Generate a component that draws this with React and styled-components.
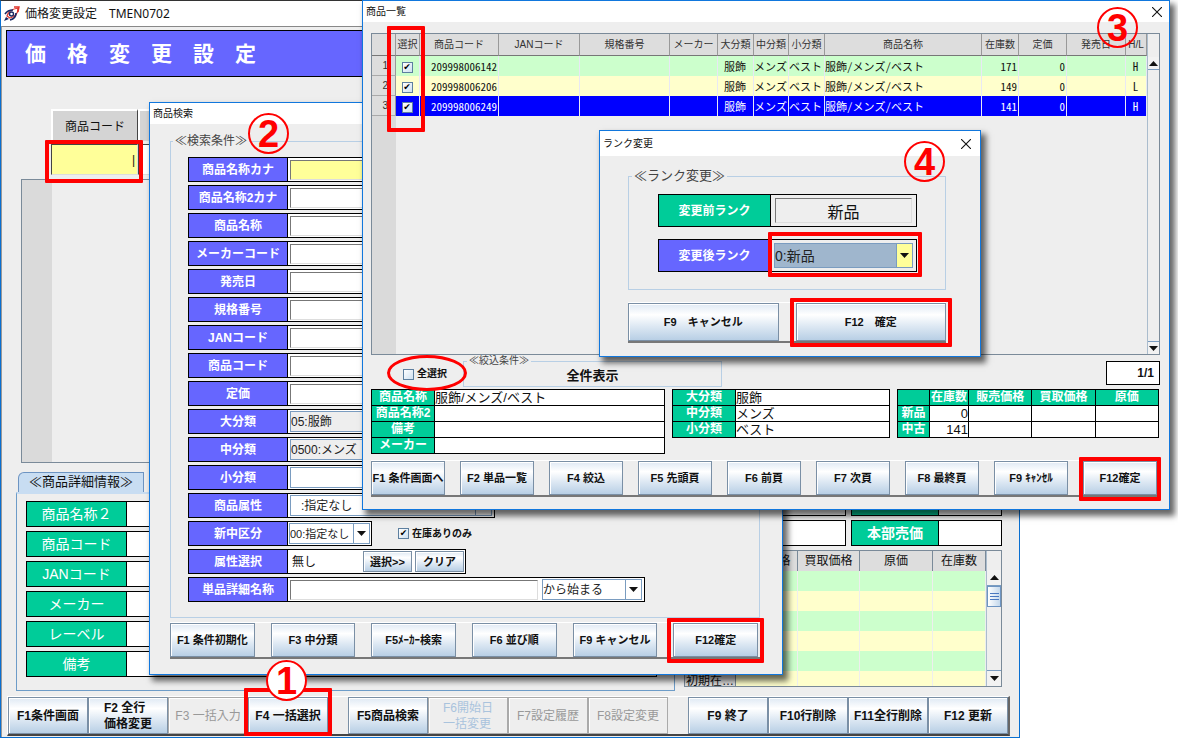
import React from "react";
import styled, { createGlobalStyle } from "styled-components";

const GlobalStyle = createGlobalStyle`
    * {
        box-sizing: border-box;
    }
    body {
        margin: 0;
        background: #fff;
        color: #111;
        font-family: "Liberation Sans", "Noto Sans CJK JP", sans-serif;
        font-size: 12px;
        line-height: 16px;
    }
    button, input, select {
        margin: 0;
        font: inherit;
        color: inherit;
        border-radius: 0;
    }
    h1, h2 {
        margin: 0;
        font-weight: normal;
    }
`;

/* ---------- windows ---------- */
const Desktop = styled.div`
    position: relative;
    min-height: 100vh;
    overflow: hidden;
`;
const MainWindow = styled.main`
    margin-right: 158px;
    min-height: 100vh;
    display: flex;
    flex-direction: column;
    background: #eee;
    border: 1px solid #0a6fd0;
    border-top-color: #333;
`;
const SubWindow = styled.section`
    position: absolute;
    z-index: ${(p) => p.$level};
    left: ${(p) => p.$left};
    right: ${(p) => p.$right};
    top: ${(p) => p.$top};
    background: #eee;
    border: 1px solid #1177dd;
    box-shadow: 4px 5px 6px 1px rgba(0, 0, 0, 0.6);
`;
const TitleBar = styled.header`
    display: flex;
    align-items: center;
    height: ${(p) => p.$height};
    padding: 0 ${(p) => p.$right || "9px"} 0 3px;
    background: #fff;
`;
const MainTitle = styled.span`
    margin-left: 5px;
    font-family: "Noto Sans", "Noto Sans CJK JP", sans-serif;
    font-size: 12px;
    white-space: pre;
`;
const SubTitle = styled.h2`
    flex: 1;
    font-size: 10px;
    line-height: 18px;
`;
const CloseButton = styled.button`
    display: flex;
    padding: 0;
    border: 0;
    background: none;
`;

/* ---------- red guide marks ---------- */
const Marked = styled.div`
    position: relative;
`;
const Mark = styled.span`
    position: absolute;
    z-index: 1;
    inset: ${(p) => p.$inset};
    width: ${(p) => p.$width || "auto"};
    border: ${(p) => (p.$round ? "3px" : "4px")} solid #f00;
    border-radius: ${(p) => (p.$round ? "50%" : "1px")};
    pointer-events: none;
`;
const StepBadge = styled.span`
    position: absolute;
    z-index: 2;
    top: ${(p) => p.$top};
    left: ${(p) => p.$left || "auto"};
    right: ${(p) => p.$right || "auto"};
    width: 41px;
    height: 41px;
    border: 2px solid #f00;
    border-radius: 50%;
    background: ${(p) => (p.$clear ? "transparent" : "#fff")};
    color: #f00;
    font-size: 38px;
    font-weight: bold;
    line-height: 38px;
    text-align: center;
`;

/* ---------- function keys ---------- */
const KeyBar = styled.div`
    display: grid;
    grid-template-columns: repeat(${(p) => p.$count}, minmax(0, 1fr));
    gap: ${(p) => p.$gap};
    margin-top: ${(p) => p.$top};
    padding-right: ${(p) => p.$end || "3px"};
    border-top: 1px solid #fff;
    border-bottom: 2px solid #777;
`;
const KeyButton = styled.button`
    display: block;
    width: 100%;
    height: ${(p) => p.$height || "34px"};
    padding: 0;
    border: 1px solid #7a8fa5;
    box-shadow: inset 1px 1px 0 #fff;
    background: linear-gradient(#dfe9f4, #fff 30%, #dde8f3 62%, #b8cfe5);
    color: #111;
    font-size: ${(p) => p.$size || "11px"};
    font-weight: bold;
    line-height: 16px;
    white-space: pre;
    &:disabled {
        background: #eee;
        border-color: #aaa;
        color: ${(p) => (p.$faint ? "#a9c3dd" : "#999")};
        font-weight: normal;
    }
`;
const MainKeys = styled.div`
    display: flex;
    gap: 20px;
    margin: 5px 9px 0 5px;
    border: 1px solid #fff;
    border-right: 2px solid #666;
    border-bottom: 2px solid #444;
`;
const MainKeyGroup = styled.div`
    flex: 1;
    display: grid;
    grid-template-columns: repeat(4, 1fr);
`;
const KeyText = styled.span`
    display: inline-block;
    text-align: left;
`;

/* ---------- main window ---------- */
const Banner = styled.h1`
    margin: 3px 4px 0 4px;
    height: 47px;
    padding-left: 18px;
    border: 1px solid #000;
    background: #6666ff;
    color: #fff;
    font-size: 21px;
    font-weight: bold;
    line-height: 45px;
`;
const MainBody = styled.div`
    flex: 1;
    border-top: 1px solid #888;
    border-left: 1px solid #999;
`;
const EntryRow = styled.div`
    display: flex;
    margin: 32px 16px 4px 49px;
`;
const EntryColumn = styled.div`
    flex: ${(p) => (p.$wide ? 1 : "none")};
    width: 87px;
`;
const EntryHead = styled.label`
    display: block;
    height: 32px;
    border: 1px solid #fff;
    border-width: 2px 0 0 2px;
    border-right: 1px solid #444;
    background: #d4d4d4;
    line-height: 33px;
    text-align: center;
`;
const EntryInput = styled.input`
    display: block;
    width: 100%;
    height: 31px;
    margin-top: 3px;
    padding: 0 2px;
    border: 1px solid #777;
    border-color: #444 #ddd #ddd #444;
    background: ${(p) => (p.$active ? "#ffff99" : "#fff")};
    outline: 0;
    text-align: right;
`;
const EmptyGrid = styled.div`
    height: 284px;
    margin: 0 16px 9px 19px;
    border: 1px solid #7a8a99;
    background: linear-gradient(90deg, #dadada 30px, #eee 30px);
`;
const Lower = styled.div`
    display: flex;
    gap: 9px;
    margin: 0 17px 0 14px;
`;
const DetailTabs = styled.section`
    flex: 1;
`;
const Tab = styled.h2`
    width: 126px;
    height: 20px;
    margin-left: 2px;
    border: 1px solid #6d94c2;
    border-bottom: 0;
    border-top-left-radius: 6px;
    background: #c8ddf2;
    font-size: 13px;
    line-height: 18px;
    text-align: center;
    white-space: nowrap;
`;
const TabPanel = styled.div`
    display: grid;
    gap: 4px;
    padding: 7px 17px 13px 9px;
    border: 1px solid #6d9cc8;
    border-top: 2px solid #c8ddf2;
`;
const InfoField = styled.div`
    display: grid;
    grid-template-columns: ${(p) => p.$label} 1fr;
    height: 26px;
    border: 1px solid #000;
    background: #fff;
`;
const InfoName = styled.span`
    border-right: 1px solid #000;
    background: #00cc99;
    color: #fff;
    font-size: 14px;
    line-height: 24px;
    text-align: center;
`;
const PriceSide = styled.section`
    width: 318px;
    padding-top: 18px;
`;
const PriceFields = styled.div`
    display: grid;
    grid-template-columns: 162px 1fr;
    gap: 4px 5px;
    margin-bottom: 4px;
    ${InfoName} {
        font-weight: bold;
    }
`;
const PriceGrid = styled.div`
    display: flex;
    height: 137px;
    overflow: hidden;
    border: 1px solid #7a8a99;
`;
const PriceTable = styled.table`
    flex: 1;
    table-layout: fixed;
    border-collapse: separate;
    border-spacing: 0;
    width: 302px;
    td, th {
        height: 20px;
        padding: 0 1px;
        border-right: 1px solid #eee;
        font-size: 12px;
        font-weight: normal;
        line-height: 18px;
        white-space: nowrap;
        overflow: hidden;
    }
    th {
        background: #ddd;
        border-right: 1px solid #7a8a99;
    }
    tbody tr {
        background: #ffffcc;
    }
    tbody tr:nth-child(odd) {
        background: #ccffcc;
    }
`;

/* ---------- scroll bar ---------- */
const ScrollColumn = styled.div`
    width: ${(p) => p.$width};
    display: flex;
    flex-direction: column;
    align-items: stretch;
    padding-top: ${(p) => p.$top};
    border-left: 1px solid #aabccd;
`;
const ScrollArrow = styled.button`
    height: ${(p) => p.$height};
    display: flex;
    align-items: center;
    justify-content: center;
    padding: 0;
    border: 0;
    border-top: ${(p) => (p.$down ? "1px solid #7a9cc0" : "0")};
    border-bottom: ${(p) => (p.$down ? "0" : "1px solid #7a9cc0")};
    background: #f2f2f2;
`;
const ScrollTrack = styled.div`
    flex: 1;
`;
const ScrollThumb = styled.div`
    height: 21px;
    display: flex;
    flex-direction: column;
    justify-content: center;
    align-items: center;
    gap: 2px;
    border: 1px solid #6d94c2;
    background: linear-gradient(90deg, #fff, #c4d8ec);
    i {
        width: 9px;
        height: 1px;
        background: #4a78c0;
    }
`;

/* ---------- labelled fields ---------- */
const GroupBox = styled.fieldset`
    min-width: 0;
    margin: 0;
    padding: 0;
    border: 1px solid #b8cfe5;
`;
const GroupLegend = styled.legend`
    margin-left: ${(p) => p.$left || "3px"};
    padding: 0 2px;
    color: #444;
    font-size: ${(p) => p.$size};
    line-height: ${(p) => p.$line || "16px"};
`;
const SearchBody = styled.div`
    padding: 9px 22px 15px 20px;
`;
const SearchFields = styled.div`
    display: grid;
    gap: 3px;
    padding: 8px 17px 15px;
`;
const SearchLine = styled.div`
    display: flex;
    align-items: center;
`;
const FieldBox = styled.div`
    display: flex;
    width: ${(p) => p.$width || "100%"};
    height: ${(p) => p.$height || "25px"};
    border: 1px solid #000;
    background: ${(p) => p.$bg || "#fff"};
`;
const FieldName = styled.label`
    flex: none;
    width: ${(p) => p.$width || "99px"};
    display: flex;
    align-items: center;
    justify-content: center;
    border-right: 1px solid #000;
    background: ${(p) => p.$color || "#6666ff"};
    color: #fff;
    font-size: ${(p) => p.$size || "12px"};
    font-weight: bold;
`;
const FieldInput = styled.input`
    flex: 1;
    min-width: 0;
    margin: ${(p) => p.$margin || "2px 2px 1px"};
    padding: 0 2px;
    border: 1px solid #777;
    border-color: #777 #ddd #ddd #777;
    background: ${(p) => p.$bg || "#fff"};
    outline: 0;
    font-size: ${(p) => p.$size || "13px"};
    text-align: ${(p) => p.$align || "left"};
`;
const PlainInput = styled(FieldInput)`
    border: 0;
`;
const ComboWrap = styled.div`
    position: relative;
    flex: ${(p) => (p.$width ? "none" : 1)};
    width: ${(p) => p.$width || "auto"};
    margin: ${(p) => p.$margin || "1px 2px"};
    border: 1px solid #7a9cc0;
`;
const ComboSelect = styled.select`
    display: block;
    width: 100%;
    height: 100%;
    padding: 0 16px 0 ${(p) => p.$indent || "0"};
    border: 0;
    appearance: none;
    background: ${(p) => p.$bg || "#fff"};
    color: #222;
    font-size: ${(p) => p.$size || "12px"};
`;
const ComboArrow = styled.span`
    position: absolute;
    top: 0;
    right: 0;
    bottom: 0;
    width: 16px;
    display: flex;
    align-items: center;
    justify-content: center;
    border-left: 1px solid #7a9cc0;
    background: ${(p) => p.$bg || "#fff"};
    pointer-events: none;
`;
const SmallButton = styled(KeyButton)`
    width: 49px;
    height: 21px;
    margin: 1px 1px 1px 2px;
`;
const CheckBox = styled.input`
    appearance: none;
    flex: none;
    width: 11px;
    height: 11px;
    display: inline-grid;
    place-items: center;
    border: 1px solid #5d7f9f;
    background: linear-gradient(135deg, #fff, #cfe0f0);
    vertical-align: middle;
    &:checked::after {
        content: "✔";
        font-family: "DejaVu Sans", sans-serif;
        font-size: 9px;
        line-height: 9px;
        color: #000;
    }
`;
const CheckLabel = styled.label`
    display: flex;
    align-items: center;
    gap: 3px;
    font-size: 10px;
    font-weight: bold;
    margin-left: ${(p) => p.$left || "0"};
`;

/* ---------- product list ---------- */
const ListBody = styled.div`
    padding: 11px 9px 12px 8px;
`;
const ListFrame = styled.div`
    position: relative;
    display: flex;
    height: 322px;
    border: 1px solid #7a8a99;
    background: linear-gradient(90deg, #dadada 24px, #eee 24px);
`;
const ListTableArea = styled.div`
    flex: 1;
`;
const ListTable = styled.table`
    width: 100%;
    table-layout: fixed;
    border-collapse: separate;
    border-spacing: 0;
    font-family: "Noto Sans Mono CJK JP", "Liberation Sans Narrow", "Noto Sans CJK JP", sans-serif;
    font-size: 11px;
    th {
        height: 22px;
        padding: 0;
        border-right: 1px solid #999;
        border-bottom: 1px solid #777;
        background: #ddd;
        color: #333;
        font-family: "Liberation Sans", "Noto Sans CJK JP", sans-serif;
        font-size: 10px;
        font-weight: normal;
        white-space: nowrap;
    }
    tbody th {
        height: 20px;
        padding-right: 7px;
        border-bottom: 1px solid #aaa;
        text-align: right;
    }
`;
const ListRow = styled.tr`
    background: ${(p) => p.$bg};
    color: ${(p) => (p.$selected ? "#fff" : "#111")};
`;
const Cell = styled.td`
    height: 20px;
    padding: 0 ${(p) => p.$end || "1px"} 1px 0;
    border-right: 1px solid #e8e8f4;
    line-height: 18px;
    text-align: ${(p) => p.$align || "left"};
    white-space: nowrap;
`;
const FilterRow = styled.div`
    display: flex;
    height: 34px;
`;
const SelectAll = styled.div`
    position: relative;
    width: 92px;
    padding: 11px 0 0 32px;
`;
const FilterGroup = styled(GroupBox)`
    width: 259px;
    height: 32px;
    font-size: 13px;
    font-weight: bold;
    line-height: 18px;
    text-align: center;
    legend {
        font-weight: normal;
        text-align: left;
    }
`;
const PageCount = styled.output`
    width: 54px;
    height: 24px;
    margin: 6px 0 0 auto;
    padding-right: 5px;
    border: 1px solid #000;
    background: #fff;
    font-weight: bold;
    line-height: 22px;
    text-align: right;
`;
const SummaryRow = styled.div`
    display: grid;
    grid-template-columns: 294fr 218fr 262fr;
    align-items: start;
    gap: 7px;
    height: 71px;
    padding-right: 1px;
`;
const SummaryTable = styled.table`
    width: 100%;
    table-layout: fixed;
    border-collapse: collapse;
    background: #fff;
    th, td {
        height: 16px;
        padding: 0;
        border: 1px solid #000;
        font-size: 13px;
        line-height: 15px;
        white-space: nowrap;
        overflow: hidden;
    }
    th {
        background: #00cc99;
        color: #fff;
        font-size: 12px;
    }
`;

/* ---------- rank dialog ---------- */
const RankBody = styled.div`
    padding: 12px 34px 13px 28px;
`;
const RankFields = styled.div`
    display: grid;
    grid-template-columns: minmax(0, 1fr);
    gap: 12px;
    padding: 10px 28px 17px 29px;
`;
const RankSlot = styled.div`
    position: relative;
    flex: 1;
    min-width: 0;
    display: flex;
`;

const Arrow = ({ up }) => (
  <svg width="9" height="5" viewBox="0 0 9 5">
    <path d={up ? "M0 5 L4.5 0 L9 5Z" : "M0 0 L9 0 L4.5 5Z"} fill="#111" />
  </svg>
);

const RocketIcon = () => (
  <svg width="16" height="16" viewBox="0 0 16 16" fill="none">
    <path d="M3 10 C4 6 8 3 14 2 C14 7 11 11 6 12Z" fill="#fff" stroke="#e0352b" strokeWidth="1.2" />
    <path d="M1 8 C3 5 6 4 9 4 M6 14 C10 13 12 11 12 7" stroke="#17265f" strokeWidth="1.6" />
    <circle cx="7.5" cy="8" r="2" stroke="#17265f" strokeWidth="1.4" />
    <path d="M0 15 L2 11 L5 13Z" fill="#17265f" />
    <path d="M10 1 L15 1 L14 6" stroke="#e0352b" strokeWidth="1.4" />
  </svg>
);

const Close = () => (
  <CloseButton type="button" aria-label="閉じる">
    <svg width="10" height="10" viewBox="0 0 10 10" stroke="#111" strokeWidth="1.1">
      <path d="M0 0 L10 10 M10 0 L0 10" />
    </svg>
  </CloseButton>
);

const Combo = ({ id, value, width, margin, bg, arrowBg, size, indent }) => (
  <ComboWrap $width={width} $margin={margin}>
    <ComboSelect id={id} aria-label={id ? undefined : value} $bg={bg} $size={size} $indent={indent}>
      <option>{value}</option>
    </ComboSelect>
    <ComboArrow $bg={arrowBg}><Arrow /></ComboArrow>
  </ComboWrap>
);

const Keys = ({ labels, gap, top, mark, end, height }) => (
  <KeyBar $count={labels.length} $gap={gap} $top={top} $end={end}>
    {labels.map((label, i) => (
      <Marked key={label}>
        <KeyButton type="button" $height={height}>{label}</KeyButton>
        {i === labels.length - 1 && <Mark $inset={mark} />}
      </Marked>
    ))}
  </KeyBar>
);

const mainKeys = [
  [{ text: "F1条件画面" }, { text: "F2 全行\n価格変更" }, { text: "F3 一括入力", off: true }, { text: "F4 一括選択", step: "1" }],
  [{ text: "F5商品検索" }, { text: "F6開始日\n一括変更", off: true, faint: true }, { text: "F7設定履歴", off: true }, { text: "F8設定変更", off: true }],
  [{ text: "F9 終了" }, { text: "F10行削除" }, { text: "F11全行削除" }, { text: "F12 更新" }],
];
const detailNames = ["商品名称２", "商品コード", "JANコード", "メーカー", "レーベル", "備考"];
const textFields = ["商品名称カナ", "商品名称2カナ", "商品名称", "メーカーコード", "発売日", "規格番号", "JANコード", "商品コード", "定価"];
const classFields = [
  ["大分類", "05:服飾"],
  ["中分類", "0500:メンズ"],
  ["小分類", ""],
];
const products = [
  { code: "209998006142", stock: 171, hl: "H", bg: "#ccffcc" },
  { code: "209998006206", stock: 149, hl: "L", bg: "#ffffcc" },
  { code: "209998006249", stock: 141, hl: "H", bg: "#0000ff", selected: true },
];
const listColumns = [
  ["", 24], ["選択", 24], ["商品コード", 79], ["JANコード", 81], ["規格番号", 90], ["メーカー", 48],
  ["大分類", 36], ["中分類", 35], ["小分類", 36], ["商品名称", null], ["在庫数", 37], ["定価", 48],
  ["発売日", 59], ["H/L", 21],
];

const MainScreen = () => (
  <MainWindow>
    <TitleBar $height="25px">
      <RocketIcon />
      <MainTitle>価格変更設定　TMEN0702</MainTitle>
    </TitleBar>
    <MainBody>
      <Banner>価　格　変　更　設　定</Banner>
      <EntryRow>
        <EntryColumn>
          <EntryHead htmlFor="entry-code">商品コード</EntryHead>
          <Marked>
            <EntryInput id="entry-code" $active defaultValue="|" />
            <Mark $inset="-4px -5px -8px -6px" />
          </Marked>
        </EntryColumn>
        <EntryColumn $wide>
          <EntryHead />
          <EntryInput aria-label="商品名称" />
        </EntryColumn>
      </EntryRow>
      <EmptyGrid />
      <Lower>
        <DetailTabs>
          <Tab>≪商品詳細情報≫</Tab>
          <TabPanel>
            {detailNames.map((name) => (
              <InfoField key={name} $label="100px">
                <InfoName>{name}</InfoName>
              </InfoField>
            ))}
          </TabPanel>
        </DetailTabs>
        <PriceSide>
          <PriceFields>
            {["", "", "", "本部売価"].map((name, i) => (
              <InfoField key={i} $label="87px">
                <InfoName>{name}</InfoName>
              </InfoField>
            ))}
          </PriceFields>
          <PriceGrid>
            <PriceTable>
              <colgroup>
                <col width="51" />
                <col width="62" />
                <col width="62" />
                <col width="73" />
                <col />
              </colgroup>
              <thead>
                <tr>
                  <th />
                  <th>販売価格</th>
                  <th>買取価格</th>
                  <th>原価</th>
                  <th>在庫数</th>
                </tr>
              </thead>
              <tbody>
                {["", "", "", "", "", "初期在…"].map((name, i) => (
                  <tr key={i}>
                    <th>{name}</th>
                    <td /><td /><td /><td />
                  </tr>
                ))}
              </tbody>
            </PriceTable>
            <ScrollColumn $width="15px" $top="19px">
              <ScrollArrow type="button" aria-label="上へ" $height="16px"><Arrow up /></ScrollArrow>
              <ScrollThumb><i /><i /><i /></ScrollThumb>
              <ScrollTrack />
              <ScrollArrow type="button" aria-label="下へ" $height="16px" $down><Arrow /></ScrollArrow>
            </ScrollColumn>
          </PriceGrid>
        </PriceSide>
      </Lower>
      <MainKeys>
        {mainKeys.map((group, g) => (
          <MainKeyGroup key={g}>
            {group.map((k) => (
              <Marked key={k.text}>
                <KeyButton type="button" $height="37px" $size="12px" disabled={k.off} $faint={k.faint}>
                  <KeyText>{k.text}</KeyText>
                </KeyButton>
                {k.step && <Mark $inset="-9px -4px -2px -4px" />}
                {k.step && <StepBadge $top="-37px" $left="18px">{k.step}</StepBadge>}
              </Marked>
            ))}
          </MainKeyGroup>
        ))}
      </MainKeys>
    </MainBody>
  </MainWindow>
);

const SearchWindow = () => (
  <SubWindow $level={1} $left="149px" $right="395px" $top="102px">
    <TitleBar $height="21px">
      <SubTitle>商品検索</SubTitle>
    </TitleBar>
    <StepBadge $top="10px" $left="98px" $clear>2</StepBadge>
    <SearchBody>
      <GroupBox>
        <GroupLegend $size="12px" $left="2px">≪検索条件≫</GroupLegend>
        <SearchFields>
          {textFields.map((name, i) => (
            <FieldBox key={name} $width="400px">
              <FieldName htmlFor={`search-${i}`}>{name}</FieldName>
              <FieldInput id={`search-${i}`} $bg={i === 0 ? "#ffff99" : "#fff"} />
            </FieldBox>
          ))}
          {classFields.map(([name, value]) => (
            <FieldBox key={name} $width="307px">
              <FieldName htmlFor={name}>{name}</FieldName>
              <Combo id={name} value={value} bg={value ? "#eee" : "#fff"} />
            </FieldBox>
          ))}
          <FieldBox $width="307px">
            <FieldName htmlFor="attr">商品属性</FieldName>
            <Combo id="attr" value=":指定なし" indent="10px" />
          </FieldBox>
          <SearchLine>
            <FieldBox $width="184px">
              <FieldName htmlFor="kind">新中区分</FieldName>
              <Combo id="kind" value="00:指定なし" margin="1px" size="11px" />
            </FieldBox>
            <CheckLabel $left="26px">
              <CheckBox type="checkbox" defaultChecked />
              在庫ありのみ
            </CheckLabel>
          </SearchLine>
          <FieldBox $width="278px">
            <FieldName htmlFor="attr-choice">属性選択</FieldName>
            <PlainInput id="attr-choice" $size="12px" defaultValue="無し" />
            <SmallButton type="button">選択&gt;&gt;</SmallButton>
            <SmallButton type="button">クリア</SmallButton>
          </FieldBox>
          <FieldBox $width="457px">
            <FieldName htmlFor="item-name">単品詳細名称</FieldName>
            <FieldInput id="item-name" />
            <Combo value="から始まる" width="100px" />
          </FieldBox>
        </SearchFields>
      </GroupBox>
      <Keys
        labels={["F1 条件初期化", "F3 中分類", "F5ﾒｰｶｰ検索", "F6 並び順", "F9 キャンセル", "F12確定"]}
        gap="16px"
        top="4px"
        end="2px"
        mark="-5px -6px -6px -6px"
      />
    </SearchBody>
  </SubWindow>
);

const ListWindow = () => (
  <SubWindow $level={2} $left="362px" $right="8px" $top="0">
    <TitleBar $height="21px" $right="7px">
      <SubTitle>商品一覧</SubTitle>
      <Close />
    </TitleBar>
    <StepBadge $top="6px" $right="31px" $clear>3</StepBadge>
    <ListBody>
      <ListFrame>
        <ListTableArea>
          <ListTable>
            <colgroup>
              {listColumns.map(([name, width]) => <col key={name} width={width || undefined} />)}
            </colgroup>
            <thead>
              <tr>
                {listColumns.map(([name]) => <th key={name}>{name}</th>)}
              </tr>
            </thead>
            <tbody>
              {products.map((p, i) => (
                <ListRow key={p.code} $bg={p.bg} $selected={p.selected}>
                  <th>{i + 1}</th>
                  <Cell $align="center"><CheckBox type="checkbox" aria-label={p.code} defaultChecked /></Cell>
                  <Cell $align="right">{p.code}</Cell>
                  <Cell />
                  <Cell />
                  <Cell />
                  <Cell $align="center">服飾</Cell>
                  <Cell>メンズ</Cell>
                  <Cell>ベスト</Cell>
                  <Cell>服飾/メンズ/ベスト</Cell>
                  <Cell $align="right">{p.stock}</Cell>
                  <Cell $align="right">0</Cell>
                  <Cell />
                  <Cell $align="center">{p.hl}</Cell>
                </ListRow>
              ))}
            </tbody>
          </ListTable>
        </ListTableArea>
        <ScrollColumn $width="12px" $top="23px">
          <ScrollArrow type="button" aria-label="上へ" $height="13px"><Arrow up /></ScrollArrow>
          <ScrollTrack />
          <ScrollArrow type="button" aria-label="下へ" $height="13px" $down><Arrow /></ScrollArrow>
        </ScrollColumn>
        <Mark $inset="-8px auto 222px 15px" $width="38px" />
      </ListFrame>
      <FilterRow>
        <SelectAll>
          <CheckLabel>
            <CheckBox type="checkbox" />
            全選択
          </CheckLabel>
          <Mark $round $inset="0 -4px -2px 16px" />
        </SelectAll>
        <FilterGroup>
          <GroupLegend $size="10px" $line="12px">≪絞込条件≫</GroupLegend>
          全件表示
        </FilterGroup>
        <PageCount>1/1</PageCount>
      </FilterRow>
      <SummaryRow>
        <SummaryTable>
          <colgroup><col width="63" /><col /></colgroup>
          <tbody>
            <tr><th>商品名称</th><td>服飾/メンズ/ベスト</td></tr>
            <tr><th>商品名称2</th><td /></tr>
            <tr><th>備考</th><td /></tr>
            <tr><th>メーカー</th><td /></tr>
          </tbody>
        </SummaryTable>
        <SummaryTable>
          <colgroup><col width="63" /><col /></colgroup>
          <tbody>
            <tr><th>大分類</th><td>服飾</td></tr>
            <tr><th>中分類</th><td>メンズ</td></tr>
            <tr><th>小分類</th><td>ベスト</td></tr>
          </tbody>
        </SummaryTable>
        <SummaryTable>
          <colgroup><col width="32" /><col width="39" /><col /><col /><col /></colgroup>
          <tbody>
            <tr><th /><th>在庫数</th><th>販売価格</th><th>買取価格</th><th>原価</th></tr>
            <tr><th>新品</th><td align="right">0</td><td /><td /><td /></tr>
            <tr><th>中古</th><td align="right">141</td><td /><td /><td /></tr>
          </tbody>
        </SummaryTable>
      </SummaryRow>
      <Keys
        labels={["F1 条件画面へ", "F2 単品一覧", "F4 絞込", "F5 先頭頁", "F6 前頁", "F7 次頁", "F8 最終頁", "F9 ｷｬﾝｾﾙ", "F12確定"]}
        gap="15px"
        top="0"
        mark="-4px -4px -6px -4px"
      />
    </ListBody>
  </SubWindow>
);

const RankDialog = () => (
  <SubWindow $level={3} $left="599px" $right="197px" $top="130px">
    <TitleBar $height="25px">
      <SubTitle>ランク変更</SubTitle>
      <Close />
    </TitleBar>
    <StepBadge $top="10px" $right="35px" $clear>4</StepBadge>
    <RankBody>
      <GroupBox>
        <GroupLegend $size="13px">≪ランク変更≫</GroupLegend>
        <RankFields>
          <FieldBox $height="33px" $bg="#eee">
            <FieldName htmlFor="rank-before" $width="112px" $color="#00cc99">変更前ランク</FieldName>
            <FieldInput id="rank-before" readOnly defaultValue="新品" $bg="#eee" $margin="3px 4px" $size="16px" $align="center" />
          </FieldBox>
          <FieldBox $height="33px" $bg="#eee">
            <FieldName htmlFor="rank-after" $width="112px">変更後ランク</FieldName>
            <RankSlot>
              <Combo id="rank-after" value="0:新品" margin="3px" bg="#9fb6cd" arrowBg="#ffff99" size="14px" />
              <Mark $inset="-8px -6px -6px -3px" />
            </RankSlot>
          </FieldBox>
        </RankFields>
      </GroupBox>
      <Keys labels={["F9　キャンセル", "F12　確定"]} gap="17px" top="12px" end="0" height="38px" mark="-5px -6px -6px -6px" />
    </RankBody>
  </SubWindow>
);

const App = () => {
  return (
    <Desktop>
      <GlobalStyle />
      <MainScreen />
      <SearchWindow />
      <ListWindow />
      <RankDialog />
    </Desktop>
  );
};

export default App;
